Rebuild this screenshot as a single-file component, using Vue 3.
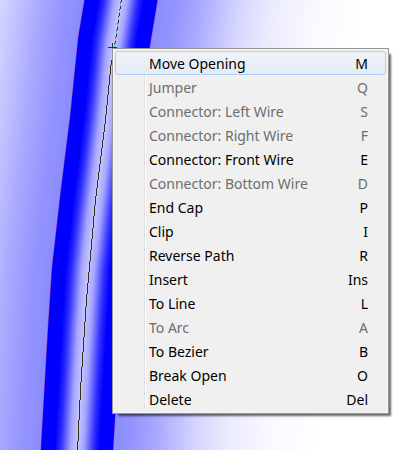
<template>
  <div class="canvas">
    <svg class="scene" aria-hidden="true">
      <g fill="none" stroke-linejoin="round">
        <path v-for="band in bands" :key="band.width" :d="wire" :stroke="band.color" :stroke-width="band.width" />
      </g>
      <path class="path-selected" d="M121.5 -1 L114.5 47" />
      <path class="path-dash" d="M121.5 -1 L114.5 47" />
      <path class="path-line" d="M111.5 60 L105.5 120 L95.5 200 L86.5 300 L80.5 390 L77.5 451" />
      <path class="cross" d="M108 47.5 H117 M112.5 43 V50" />
    </svg>

    <ul class="menu" role="menu">
      <li v-for="item in items" :key="item.label" role="none">
        <button
          type="button"
          role="menuitem"
          class="item"
          :class="{ active: active === item.label }"
          :disabled="item.disabled"
          @mouseenter="active = item.label"
        >
          <span>{{ item.label }}</span>
          <span>{{ item.shortcut }}</span>
        </button>
      </li>
    </ul>
  </div>
</template>

<script setup>
import { ref } from 'vue'

const active = ref('Move Opening')

const items = [
  { label: 'Move Opening', shortcut: 'M' },
  { label: 'Jumper', shortcut: 'Q', disabled: true },
  { label: 'Connector: Left Wire', shortcut: 'S', disabled: true },
  { label: 'Connector: Right Wire', shortcut: 'F', disabled: true },
  { label: 'Connector: Front Wire', shortcut: 'E' },
  { label: 'Connector: Bottom Wire', shortcut: 'D', disabled: true },
  { label: 'End Cap', shortcut: 'P' },
  { label: 'Clip', shortcut: 'I' },
  { label: 'Reverse Path', shortcut: 'R' },
  { label: 'Insert', shortcut: 'Ins' },
  { label: 'To Line', shortcut: 'L' },
  { label: 'To Arc', shortcut: 'A', disabled: true },
  { label: 'To Bezier', shortcut: 'B' },
  { label: 'Break Open', shortcut: 'O' },
  { label: 'Delete', shortcut: 'Del' },
]

const wire = 'M185 -400 L121 0 L114 42 L106 120 L96 200 L88 270 L84 330 L77 450 L60 850'

// [distance from the wire centre, red/green level]
const stops = [
  [240, 255],
  [190, 248],
  [150, 235],
  [120, 215],
  [80, 170],
  [55, 148],
  [37, 140],
  [36, 0],
  [23, 0],
  [17, 45],
  [12, 105],
  [7, 165],
  [0, 200],
]

function level(d) {
  for (let i = 1; i < stops.length; i++) {
    const [d1, v1] = stops[i - 1]
    const [d2, v2] = stops[i]
    if (d >= d2) return Math.round(v2 + ((v1 - v2) * (d - d2)) / (d1 - d2))
  }
  return 255
}

// wide strokes first, narrow ones on top
const bands = []
for (let d = 240; d > 0; d--) {
  const v = level(d)
  bands.push({ width: d * 2, color: `rgb(${v}, ${v}, 255)` })
  // thin outline of the wire
  if (d === 37) bands.push({ width: 73, color: '#a050b0' })
}
</script>

<style>
body {
  margin: 0;
  background: #fff;
}
</style>

<style scoped>
.canvas {
  position: relative;
  min-height: 100vh;
  overflow: hidden;
  font-family: "Noto Sans", "Open Sans", sans-serif;
}
.scene {
  position: absolute;
  inset: 0;
  width: 100%;
  height: 100%;
}
.path-selected,
.path-dash,
.path-line,
.cross {
  fill: none;
  stroke: #33331a;
  stroke-width: 1;
  shape-rendering: crispEdges;
}
.path-selected {
  stroke: #4cc4ff;
}
.path-dash {
  stroke-dasharray: 4 3;
}
.menu {
  position: absolute;
  top: 48px;
  left: 112px;
  min-width: 277px;
  box-sizing: border-box;
  margin: 0;
  padding: 2px;
  list-style: none;
  border: 1px solid #979797;
  background: linear-gradient(#e0e0e0, #e0e0e0) 31px 2px / 1px calc(100% - 4px) no-repeat,
    linear-gradient(#fff, #fff) 32px 2px / 1px calc(100% - 4px) no-repeat,
    #f0f0f0;
  box-shadow: inset 0 0 0 1px #f5f5f5, 4px 4px 2px -2px rgba(0, 0, 0, 0.6);
}
.item {
  display: flex;
  justify-content: space-between;
  align-items: center;
  gap: 24px;
  width: 100%;
  height: 24px;
  padding: 2px 17px 0 33px;
  border: 1px solid transparent;
  border-radius: 3px;
  background: none;
  color: #000;
  font-family: inherit;
  font-size: 14px;
  line-height: 20px;
  text-align: left;
}
.item:disabled {
  color: #6d6d6d;
}
.item.active {
  border-color: #aecff7;
  background: linear-gradient(rgba(240, 243, 248, 0.8), rgba(225, 234, 247, 0.8));
}
</style>
